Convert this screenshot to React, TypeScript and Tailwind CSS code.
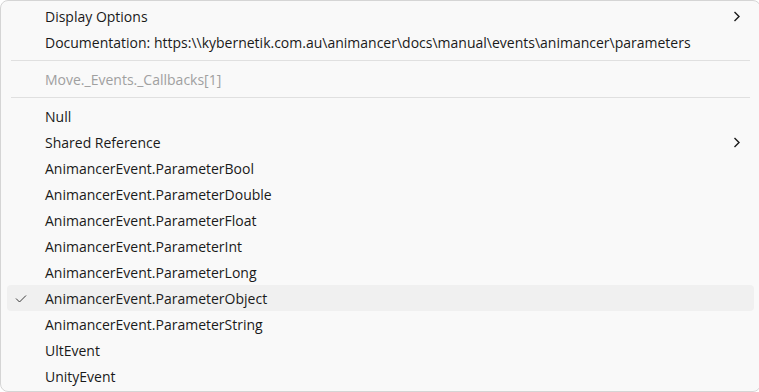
import { Fragment } from "react";

type Item = {
  label: string;
  submenu?: boolean;
  disabled?: boolean;
  checked?: boolean;
  separatorBefore?: boolean;
};

const items: Item[] = [
  { label: "Display Options", submenu: true },
  { label: "Documentation: https:\\\\kybernetik.com.au\\animancer\\docs\\manual\\events\\animancer\\parameters" },
  { label: "Move._Events._Callbacks[1]", disabled: true, separatorBefore: true },
  { label: "Null", separatorBefore: true },
  { label: "Shared Reference", submenu: true },
  { label: "AnimancerEvent.ParameterBool" },
  { label: "AnimancerEvent.ParameterDouble" },
  { label: "AnimancerEvent.ParameterFloat" },
  { label: "AnimancerEvent.ParameterInt" },
  { label: "AnimancerEvent.ParameterLong" },
  { label: "AnimancerEvent.ParameterObject", checked: true },
  { label: "AnimancerEvent.ParameterString" },
  { label: "UltEvent" },
  { label: "UnityEvent" },
];

function Chevron() {
  return (
    <svg width="8" height="11" viewBox="0 0 8 11" className="absolute right-[13px] top-[8px]">
      <path d="M1.5 1 L6 5.5 L1.5 10" fill="none" stroke="#1a1a1a" strokeWidth="1.4" />
    </svg>
  );
}

function Check() {
  return (
    <svg width="12" height="10" viewBox="0 0 12 10" className="absolute left-[8px] top-[9px]">
      <path d="M1 4.5 L4.5 8 L11 1.5" fill="none" stroke="#3a3a3a" strokeWidth="1" />
    </svg>
  );
}

export default function App() {
  return (
    <div className="w-[759px] h-[392px] bg-white overflow-hidden font-['Open_Sans',sans-serif]">
      <div className="w-[761px] h-[392px] bg-[#f9f9f9] border border-[#d5d5d5] rounded-lg pt-[2px] px-[6px]">
        {items.map((item) => (
          <Fragment key={item.label}>
            {item.separatorBefore && (
              <div className="h-[11px] flex items-center px-[4px]">
                <div className="h-px w-full bg-[#e0e0e0]" />
              </div>
            )}
            <div
              className={
                "relative h-[26px] rounded pl-[38px] flex items-center text-[14px] whitespace-nowrap " +
                (item.checked ? "bg-[#f0f0f0] " : "") +
                (item.disabled ? "text-[#a0a0a0]" : "text-[#1a1a1a]")
              }
            >
              {item.checked && <Check />}
              {item.label}
              {item.submenu && <Chevron />}
            </div>
          </Fragment>
        ))}
      </div>
    </div>
  );
}
